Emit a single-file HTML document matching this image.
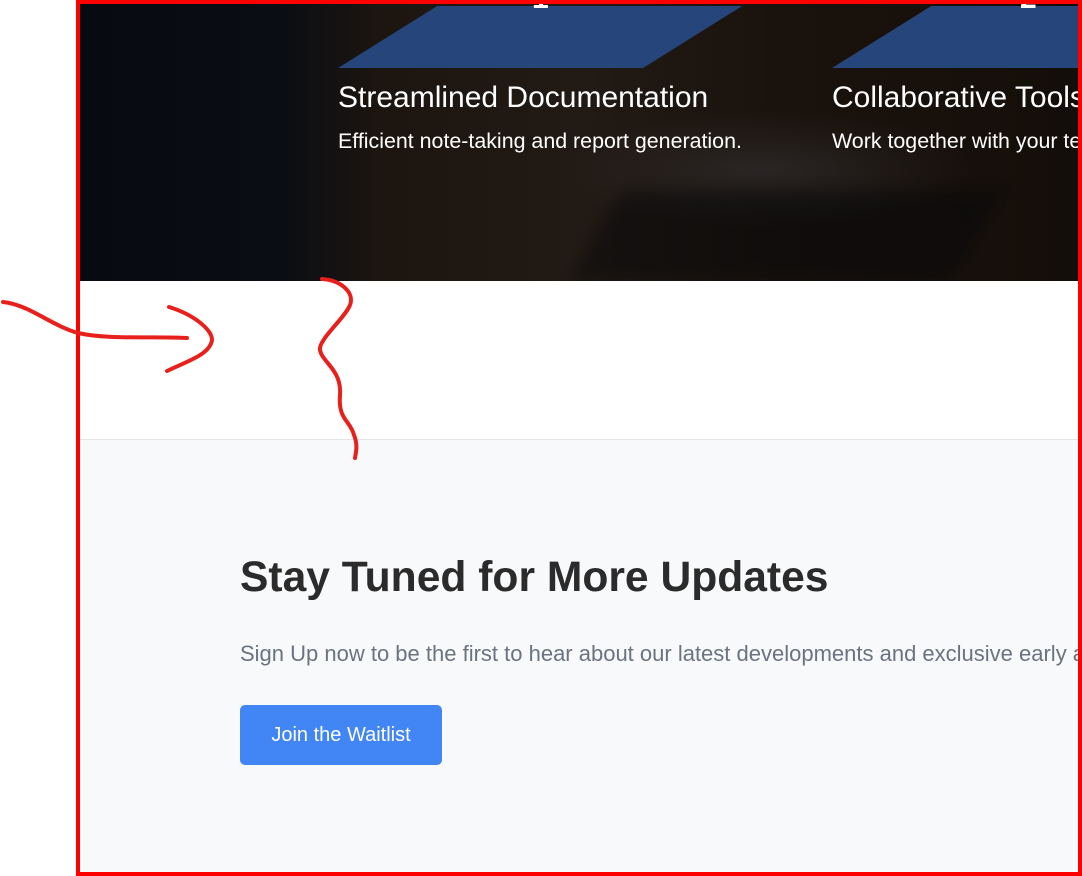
<!DOCTYPE html>
<html><head><meta charset="utf-8"><style>
*{margin:0;padding:0;box-sizing:border-box}
body{width:1082px;height:876px;background:#fff;position:relative;overflow:hidden;font-family:"Liberation Sans",Roboto,sans-serif}
.hero{position:absolute;left:76px;top:0;width:1006px;height:281px;background:linear-gradient(90deg,#070a10 0%,#0a0d13 20%,#1c1510 30%,#221a14 50%,#1a120c 70%,#140e0a 100%);overflow:hidden}
.hero .glow{position:absolute;left:480px;top:110px;width:420px;height:120px;background:radial-gradient(ellipse,rgba(60,60,65,.45),rgba(0,0,0,0) 70%)}
.hero .shade{position:absolute;left:520px;top:190px;width:380px;height:91px;background:rgba(5,7,10,.45);transform:skewX(-30deg);filter:blur(8px)}
.para{position:absolute;background:#26467b;height:62px;top:6px;width:305px;transform:skewX(-58deg);transform-origin:bottom left}
.num{position:absolute;color:#fff;font-size:30px;font-weight:bold;top:-18px}
.t{position:absolute;color:#fff;font-size:30px;top:81px;white-space:nowrap}
.s{position:absolute;color:#fff;font-size:21.4px;top:129px;white-space:nowrap}
.sec{position:absolute;left:76px;top:439px;width:1006px;height:437px;background:#f8f9fb;border-top:1px solid #e2e4e8;overflow:hidden}
h2{position:absolute;left:164px;top:113px;font-size:42.6px;color:#2b2b2b;font-weight:bold;white-space:nowrap}
p{position:absolute;left:164px;top:201px;font-size:22px;color:#6b7280;white-space:nowrap}
.btn{position:absolute;left:164px;top:265px;width:202px;height:60px;background:#4285f4;border-radius:5px;color:#fff;font-size:20px;text-align:center;line-height:60px}
.frame{position:absolute;left:76px;top:0;width:1006px;height:876px;border:4px solid #f00}
</style></head><body>
<div class="hero"><div class="glow"></div><div class="shade"></div>
<div class="para" style="left:262px"></div>
<div class="para" style="left:756px"></div>
<div class="num" style="left:456px">1</div>
<div class="num" style="left:944px">2</div>
<div class="t" style="left:262px">Streamlined Documentation</div>
<div class="s" style="left:262px">Efficient note-taking and report generation.</div>
<div class="t" style="left:756px">Collaborative Tools</div>
<div class="s" style="left:756px">Work together with your team</div>
</div>
<div class="sec">
<h2>Stay Tuned for More Updates</h2>
<p>Sign Up now to be the first to hear about our latest developments and exclusive early access</p>
<div class="btn">Join the Waitlist</div>
</div>
<div class="frame"></div>
<svg width="1082" height="876" style="position:absolute;left:0;top:0" fill="none" stroke="#e8201c" stroke-width="4" stroke-linecap="round">
<path d="M3,302 C30,305 50,325 78,333 C110,340 150,336 187,338"/>
<path d="M169,307 C195,315 212,330 212,340 C210,355 185,362 167,371"/>
<path d="M322,279 C340,280 355,292 350,305 C345,318 318,340 320,350 C322,362 342,370 340,395 C338,420 350,420 354,435 C358,445 356,452 355,458"/>
</svg>
</body></html>
